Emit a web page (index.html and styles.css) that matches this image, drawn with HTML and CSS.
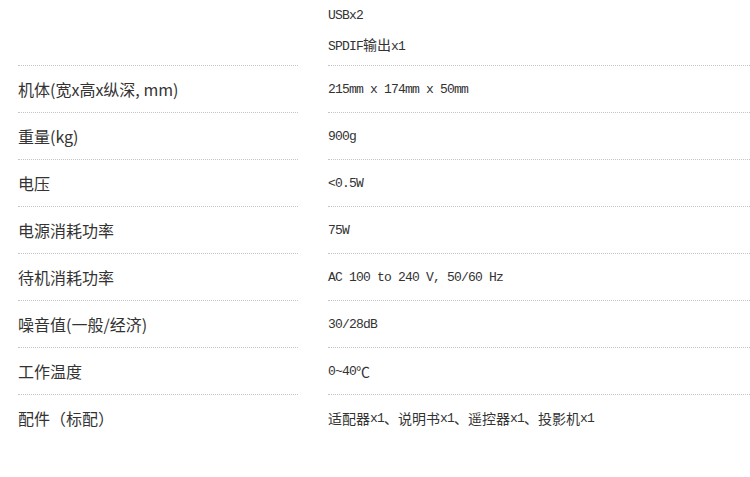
FILE: index.html
```html
<!DOCTYPE html>
<html lang="zh-CN">
<head>
<meta charset="utf-8">
<title>规格参数</title>
<link rel="stylesheet" href="styles.css">
</head>
<body>
<div class="spec">
  <div class="k first"></div>
  <div class="v first">
    <p>USBx2</p>
    <p>SPDIF<span class="cj">输出</span>x1</p>
  </div>

  <div class="k">机体(宽x高x纵深, mm)</div>
  <div class="v">215mm x 174mm x 50mm</div>

  <div class="k">重量(kg)</div>
  <div class="v">900g</div>

  <div class="k">电压</div>
  <div class="v">&lt;0.5W</div>

  <div class="k">电源消耗功率</div>
  <div class="v">75W</div>

  <div class="k">待机消耗功率</div>
  <div class="v">AC 100 to 240 V, 50/60 Hz</div>

  <div class="k">噪音值(一般/经济)</div>
  <div class="v">30/28dB</div>

  <div class="k">工作温度</div>
  <div class="v">0~40<span class="cj">℃</span></div>

  <div class="k last">配件（标配）</div>
  <div class="v last"><span class="cj">适配器</span>x1<span class="cj">、说明书</span>x1<span class="cj">、遥控器</span>x1<span class="cj">、投影机</span>x1</div>
</div>
</body>
</html>
```

FILE: styles.css
```css
html, body {
  margin: 0;
  padding: 0;
  background: #fff;
}

body {
  padding-left: 18px;
}

.spec {
  display: grid;
  grid-template-columns: 280px 1fr;
  column-gap: 30px;
}

.k, .v {
  height: 46px;
  display: flex;
  align-items: center;
  border-bottom: 1px dotted #c4c4c4;
  color: #333;
}

.k {
  font-family: "Noto Sans CJK SC", "Noto Sans", sans-serif;
  font-size: 16px;
}

.v {
  font-family: "Liberation Mono", "Noto Sans CJK SC", monospace;
  font-size: 13px;
  letter-spacing: -0.8px;
  white-space: pre;
}

.cj {
  font-family: "Noto Sans CJK SC", sans-serif;
  font-size: 14px;
  letter-spacing: 0;
}

.first {
  height: 65px;
}

.v.first {
  flex-direction: column;
  align-items: flex-start;
  justify-content: flex-start;
  padding-top: 2px;
  height: 63px;
}

.v.first p {
  margin: 0;
  line-height: 28px;
}

.last {
  border-bottom: none;
}
```
